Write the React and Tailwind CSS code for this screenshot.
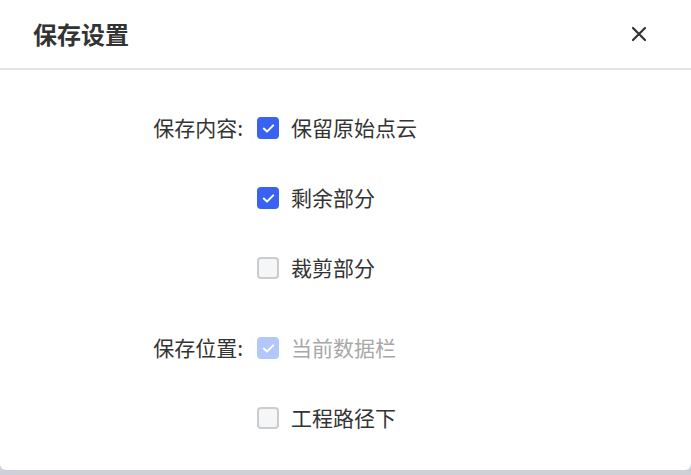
import React from "react";

const font = { fontFamily: '"Noto Sans CJK SC", "Noto Sans", sans-serif' };

function Box({ state }) {
  if (state === "off") {
    return <span className="w-[22px] h-[22px] rounded-[4px] border-2 border-[#cccccc] bg-[#f5f6f8] shrink-0" />;
  }
  const bg = state === "disabled" ? "bg-[#b3c7fd]" : "bg-[#3a62f2]";
  return (
    <span className={`w-[22px] h-[22px] rounded-[4px] ${bg} shrink-0 flex items-center justify-center`}>
      <svg width="13" height="11" viewBox="0 0 13 11" fill="none">
        <path d="M1.8 5.6 L5 8.6 L11.2 2.4" stroke="white" strokeWidth="2" strokeLinecap="round" strokeLinejoin="round" />
      </svg>
    </span>
  );
}

function Row({ label, state, text }) {
  return (
    <div className="flex items-center h-[70px]">
      <div className="w-[243px] text-right text-[21px] text-[#333333]">{label}</div>
      <div className="ml-[14px] flex items-center gap-[12px]">
        <Box state={state} />
        <span className={`text-[21px] ${state === "disabled" ? "text-[#a8a8a8]" : "text-[#333333]"}`}>{text}</span>
      </div>
    </div>
  );
}

export default function App() {
  return (
    <div className="w-[691px] h-[475px] bg-[#cdd0d6] overflow-hidden" style={font}>
      <div className="h-[470px] bg-white rounded-b-[6px] flex flex-col">
        <div className="h-[68px] flex items-center justify-between pl-[33px] pr-[44px] shrink-0">
          <span className="text-[24px] font-bold text-[#333333]">保存设置</span>
          <svg width="16" height="16" viewBox="0 0 16 16" fill="none">
            <path d="M2 2 L14 14 M14 2 L2 14" stroke="#333333" strokeWidth="2.2" strokeLinecap="round" />
          </svg>
        </div>
        <div className="h-[2px] bg-[#e4e4e4] shrink-0" />
        <div className="pt-[23px]">
          <Row label="保存内容:" state="on" text="保留原始点云" />
          <Row label="" state="on" text="剩余部分" />
          <Row label="" state="off" text="裁剪部分" />
          <div className="h-[10px]" />
          <Row label="保存位置:" state="disabled" text="当前数据栏" />
          <Row label="" state="off" text="工程路径下" />
        </div>
      </div>
    </div>
  );
}
